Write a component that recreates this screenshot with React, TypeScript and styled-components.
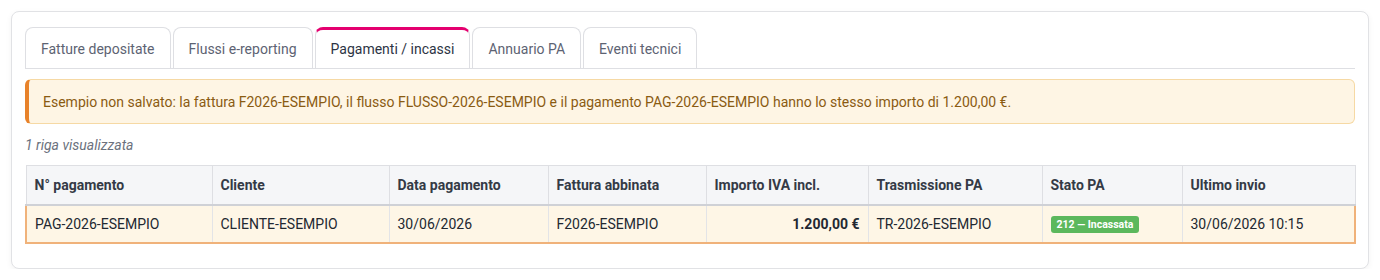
import React from "react";
import styled, { createGlobalStyle } from "styled-components";

const GlobalStyle = createGlobalStyle`
  html, body { margin: 0; padding: 0; background: #ffffff; }
  body { font-family: Roboto, "Noto Sans", "Liberation Sans", sans-serif; color: #2d3444; }
  * { box-sizing: border-box; }
`;

const Page = styled.div`
  padding: 11px 11px 0 11px;
`;

const Card = styled.div`
  background: #fff;
  border: 1px solid #e1e2e5;
  border-radius: 8px;
  box-shadow: 0 2px 6px rgba(0, 0, 0, 0.05);
  padding: 15px 13px 24px 13px;
  height: 258px;
`;

const TabBar = styled.div`
  display: flex;
  gap: 2px;
  border-bottom: 1px solid #dedfe3;
  height: 42px;
`;

const Tab = styled.div<{ $active?: boolean }>`
  height: 41px;
  padding: 0 15px;
  display: flex;
  align-items: center;
  font-size: 14px;
  color: ${(p) => (p.$active ? "#2d3444" : "#5d6373")};
  background: #fff;
  border: 1px solid #dedfe3;
  border-bottom: none;
  border-top: ${(p) => (p.$active ? "3px solid #e4006f" : "1px solid #dedfe3")};
  border-radius: 8px 8px 0 0;
  padding-top: ${(p) => (p.$active ? "0" : "2px")};
`;

const Alert = styled.div`
  margin-top: 10px;
  height: 45px;
  background: #fef5e4;
  border: 1px solid #f6d9a4;
  border-left: 4px solid #e8822a;
  border-radius: 6px;
  padding: 0 14px;
  display: flex;
  align-items: center;
  font-size: 14px;
  color: #8a5b12;
`;

const Count = styled.div`
  margin-top: 12px;
  font-size: 14px;
  font-style: italic;
  color: #6b717d;
  height: 18px;
  line-height: 18px;
`;

const Table = styled.table`
  margin-top: 11px;
  width: 100%;
  border-collapse: collapse;
  table-layout: fixed;
  font-size: 14px;
`;

const Th = styled.th`
  background: #f5f6f8;
  border: 1px solid #dedfe3;
  border-bottom: 2px solid #cfd1d6;
  text-align: left;
  font-weight: 700;
  color: #343a46;
  height: 39px;
  padding: 0 8px;
`;

const Row = styled.tr`
  background: #fef6e6;
`;

const Td = styled.td<{ $right?: boolean; $strong?: boolean }>`
  height: 38px;
  padding: 0 8px;
  border-top: 2px solid #f0b27a;
  border-bottom: 2px solid #f0b27a;
  border-left: 1px solid #e3e4e7;
  border-right: 1px solid #e3e4e7;
  color: #222831;
  text-align: ${(p) => (p.$right ? "right" : "left")};
  font-weight: ${(p) => (p.$strong ? 700 : 400)};
  &:first-child { border-left: 2px solid #f0b27a; }
  &:last-child { border-right: 2px solid #f0b27a; }
`;

const Badge = styled.span`
  display: inline-block;
  background: #5cb85c;
  color: #fff;
  font-size: 10.5px;
  font-weight: 700;
  line-height: 17px;
  padding: 0 6px;
  border-radius: 3px;
`;

const tabs = [
  "Fatture depositate",
  "Flussi e-reporting",
  "Pagamenti / incassi",
  "Annuario PA",
  "Eventi tecnici",
];

const columns = [
  { label: "N° pagamento", w: 186 },
  { label: "Cliente", w: 177 },
  { label: "Data pagamento", w: 159 },
  { label: "Fattura abbinata", w: 158 },
  { label: "Importo IVA incl.", w: 162 },
  { label: "Trasmissione PA", w: 174 },
  { label: "Stato PA", w: 140 },
  { label: "Ultimo invio", w: 173 },
];

export default function App() {
  return (
    <>
      <GlobalStyle />
      <Page>
        <Card>
          <TabBar>
            {tabs.map((t) => (
              <Tab key={t} $active={t === "Pagamenti / incassi"}>
                {t}
              </Tab>
            ))}
          </TabBar>
          <Alert>
            Esempio non salvato: la fattura F2026-ESEMPIO, il flusso FLUSSO-2026-ESEMPIO e il pagamento
            PAG-2026-ESEMPIO hanno lo stesso importo di 1.200,00 €.
          </Alert>
          <Count>1 riga visualizzata</Count>
          <Table>
            <colgroup>
              {columns.map((c) => (
                <col key={c.label} style={{ width: c.w }} />
              ))}
            </colgroup>
            <thead>
              <tr>
                {columns.map((c) => (
                  <Th key={c.label}>{c.label}</Th>
                ))}
              </tr>
            </thead>
            <tbody>
              <Row>
                <Td>PAG-2026-ESEMPIO</Td>
                <Td>CLIENTE-ESEMPIO</Td>
                <Td>30/06/2026</Td>
                <Td>F2026-ESEMPIO</Td>
                <Td $right $strong>
                  1.200,00 €
                </Td>
                <Td>TR-2026-ESEMPIO</Td>
                <Td>
                  <Badge>212 — Incassata</Badge>
                </Td>
                <Td>30/06/2026 10:15</Td>
              </Row>
            </tbody>
          </Table>
        </Card>
      </Page>
    </>
  );
}
